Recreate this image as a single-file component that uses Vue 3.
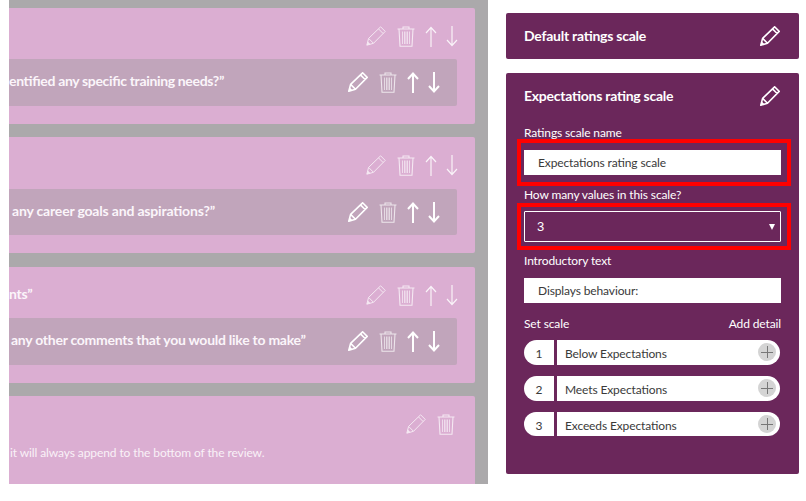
<script setup>
const cards = [
  { head: '', text: 'entified any specific training needs?”', pad: 0, cls: 'a', ls: -0.34 },
  { head: '', text: 'any career goals and aspirations?”', pad: 3, cls: 'b', ls: -0.18 },
  { head: 'nts”', text: 'any other comments that you would like to make”', pad: 2, cls: 'a', ls: -0.26 }
]
const scale = [
  { n: 1, label: 'Below Expectations' },
  { n: 2, label: 'Meets Expectations' },
  { n: 3, label: 'Exceeds Expectations' }
]
</script>

<template>
  <div class="page">
    <svg class="defs" aria-hidden="true">
      <symbol id="pencil" viewBox="0 0 20 20">
        <path d="M0.8 19.2 L2.6 12.4 L14.6 0.8 L19.2 5.4 L7.5 17.3 Z M2.6 12.4 L7.5 17.3 M12.5 2.9 L17.1 7.5" fill="none" stroke="currentColor" stroke-linejoin="round" />
        <path d="M0.8 19.2 L1.8 15.5 L4.5 18.2 Z" fill="currentColor" />
      </symbol>
      <symbol id="trash" viewBox="0 0 18 21">
        <path d="M0.5 3 H17.5 M6 3 V1 H12 V3 M2 3 L3 20.2 H15 L16 3" fill="none" stroke="currentColor" stroke-width="1.1" />
        <path d="M5.5 5.5 V18 M7.5 5.5 V18 M9 5.5 V18 M10.5 5.5 V18 M12.5 5.5 V18" fill="none" stroke="currentColor" stroke-width="0.8" />
      </symbol>
      <symbol id="up" viewBox="0 0 12 21">
        <path d="M6 21 V1.5 M1 7 L6 1.5 L11 7" fill="none" stroke="currentColor" />
      </symbol>
      <symbol id="down" viewBox="0 0 12 21">
        <path d="M6 0 V19.5 M1 14 L6 19.5 L11 14" fill="none" stroke="currentColor" />
      </symbol>
    </svg>

    <section class="board">
      <article v-for="c in cards" :key="c.text" class="card" :class="c.cls">
        <div class="head">
          <span class="qtext">{{ c.head }}</span>
          <div class="icons">
            <svg class="i pencil faint"><use href="#pencil" /></svg>
            <svg class="i trash faint"><use href="#trash" /></svg>
            <svg class="i arrow soft"><use href="#up" /></svg>
            <svg class="i arrow soft"><use href="#down" /></svg>
          </div>
        </div>
        <div class="question">
          <span class="qtext lifted" :style="{ paddingLeft: c.pad + 'px', letterSpacing: c.ls + 'px' }">{{ c.text }}</span>
          <div class="icons strong">
            <svg class="i pencil"><use href="#pencil" /></svg>
            <svg class="i trash faint"><use href="#trash" /></svg>
            <svg class="i arrow"><use href="#up" /></svg>
            <svg class="i arrow"><use href="#down" /></svg>
          </div>
        </div>
      </article>
      <article class="card last">
        <div class="head end">
          <div class="icons">
            <svg class="i pencil faint"><use href="#pencil" /></svg>
            <svg class="i trash faint"><use href="#trash" /></svg>
          </div>
        </div>
        <p class="note">it will always append to the bottom of the review.</p>
      </article>
    </section>

    <aside class="side">
      <div class="panel title-only">
        <h2>Default ratings scale</h2>
        <svg class="i pencil"><use href="#pencil" /></svg>
      </div>
      <div class="panel form">
        <div class="title-row">
          <h2>Expectations rating scale</h2>
          <svg class="i pencil"><use href="#pencil" /></svg>
        </div>
        <label class="lab first">Ratings scale name</label>
        <div class="field marked m1"><div class="input">Expectations rating scale</div></div>
        <label class="lab">How many values in this scale?</label>
        <div class="field marked m2">
          <div class="select"><span>3</span><i class="caret"></i></div>
        </div>
        <label class="lab third">Introductory text</label>
        <div class="field"><div class="input">Displays behaviour:</div></div>
        <div class="set-row">
          <span>Set scale</span>
          <span>Add detail</span>
        </div>
        <div class="scale">
          <div v-for="s in scale" :key="s.n" class="row">
            <span class="num">{{ s.n }}</span>
            <span class="desc">{{ s.label }}<b class="plus"></b></span>
          </div>
        </div>
      </div>
    </aside>
  </div>
</template>

<style>
html, body { margin: 0; background: #fff; }
</style>

<style scoped>
.page {
  width: 806px;
  height: 501px;
  display: flex;
  align-items: flex-start;
  font-family: Lato, "Liberation Sans", sans-serif;
  font-variant-ligatures: common-ligatures;
  font-feature-settings: "liga" 1;
  overflow: hidden;
  background: #fff;
}
.defs { display: none; }
.board {
  margin-left: 9px;
  width: 479px;
  height: 484px;
  box-sizing: border-box;
  background: #aba9ab;
  padding: 8px 13px 0 0;
  display: flex;
  flex-direction: column;
  gap: 13px;
  overflow: hidden;
  flex: none;
}
.card {
  background: #dbaed2;
  border-radius: 0 2px 2px 0;
  height: 116px;
  flex: none;
  padding-top: 18px;
  box-sizing: border-box;
  color: #fff;
}
.card:nth-child(3) { margin-top: 1px; }
.card.last { height: 88px; border-radius: 0 2px 0 0; }
.head {
  display: flex;
  justify-content: space-between;
  height: 21px;
  padding-right: 17px;
}
.head.end { justify-content: flex-end; padding-right: 20px; }
.qtext {
  font-size: 14px;
  font-weight: 700;
  line-height: 18px;
  letter-spacing: -0.25px;
  white-space: nowrap;
  color: #fbf5fa;
}
.lifted { margin-bottom: 3px; }
.question {
  margin: 12px 18px 0 0;
  height: 47px;
  background: #c1a5bb;
  border-radius: 0 2px 2px 0;
  display: flex;
  align-items: center;
  justify-content: space-between;
  padding-right: 17px;
}
.card.b .question { margin-top: 13px; height: 46px; }
.icons {
  display: flex;
  align-items: flex-start;
  gap: 10px;
  color: #fff;
}
.i { display: block; flex: none; }
.pencil { width: 20px; height: 20px; margin-right: 1px; stroke-width: 1px; }
.strong .pencil { stroke-width: 1.6px; }
.trash { width: 18px; height: 21px; }
.arrow { width: 12px; height: 21px; stroke-width: 1.2px; }
.strong .arrow { stroke-width: 2px; }
.arrow + .arrow { margin-left: -1px; }
.faint { opacity: 0.72; }
.soft { opacity: 0.85; }
.note {
  margin: 9px 0 0 1px;
  font-size: 12px;
  letter-spacing: -0.1px;
  line-height: 17px;
  color: #f9f1f7;
}

.side {
  margin-left: 18px;
  padding-top: 13px;
  width: 293px;
  flex: none;
  display: flex;
  flex-direction: column;
  gap: 14px;
  color: #fff;
}
.side .pencil { margin-right: 0; stroke-width: 1.6px; }
.panel { background: #6b275b; border-radius: 2px; box-sizing: border-box; }
.title-only, .title-row {
  height: 46px;
  display: flex;
  align-items: center;
  justify-content: space-between;
}
.title-only { padding: 0 19px 0 18px; }
.title-row { margin-right: 1px; }
h2 {
  margin: 0;
  font-size: 14px;
  font-weight: 700;
  line-height: 18px;
  letter-spacing: -0.25px;
  color: #fff;
}
.form { height: 401px; padding: 0 18px; }
.lab {
  display: block;
  font-size: 12px;
  letter-spacing: -0.13px;
  line-height: 17px;
  margin: 11px 0 8px;
  color: #fff;
}
.lab.first { margin: 5px 0 9px; }
.lab.third { margin: 10px 0 9px; }
.field { position: relative; }
.marked::after {
  content: "";
  position: absolute;
  border: 4px solid #f00;
  pointer-events: none;
}
.m1::after { left: -7px; right: -10px; top: -11px; bottom: -11px; }
.m2::after { left: -7px; right: -10px; top: -8px; bottom: -8px; }
.input {
  height: 25px;
  box-sizing: border-box;
  background: #fff;
  color: #3a3a3a;
  font-size: 12px;
  letter-spacing: -0.12px;
  line-height: 25px;
  padding-left: 14px;
}
.select {
  height: 31px;
  box-sizing: border-box;
  border: 1px solid #fff;
  border-radius: 1px;
  display: flex;
  align-items: center;
  justify-content: space-between;
  padding: 0 5px 0 12px;
  font: 13px "Liberation Sans", sans-serif;
  color: #fff;
}
.caret {
  width: 0;
  height: 0;
  border-left: 3.5px solid transparent;
  border-right: 3.5px solid transparent;
  border-top: 6px solid #fff;
}
.set-row {
  display: flex;
  justify-content: space-between;
  font-size: 12px;
  letter-spacing: -0.12px;
  line-height: 17px;
  margin: 12px 0 8px;
}
.scale { display: flex; flex-direction: column; gap: 11px; width: 256px; }
.row {
  display: flex;
  gap: 3px;
  height: 25px;
  color: #3a3a3a;
  font-size: 12px;
  letter-spacing: -0.12px;
  line-height: 27px;
}
.row:last-child { height: 24px; }
.num {
  width: 30px;
  flex: none;
  box-sizing: border-box;
  background: #fff;
  border-radius: 13px 0 0 13px;
  text-align: center;
}
.desc {
  flex: 1;
  position: relative;
  background: #fff;
  border-radius: 0 13px 13px 0;
  padding-left: 8px;
}
.plus {
  position: absolute;
  right: 4px;
  top: 3px;
  width: 18px;
  height: 18px;
  border-radius: 50%;
  background:
    linear-gradient(#777, #777) center / 12px 1px no-repeat,
    linear-gradient(#777, #777) center / 1px 12px no-repeat,
    #d4d4d4;
}
</style>
